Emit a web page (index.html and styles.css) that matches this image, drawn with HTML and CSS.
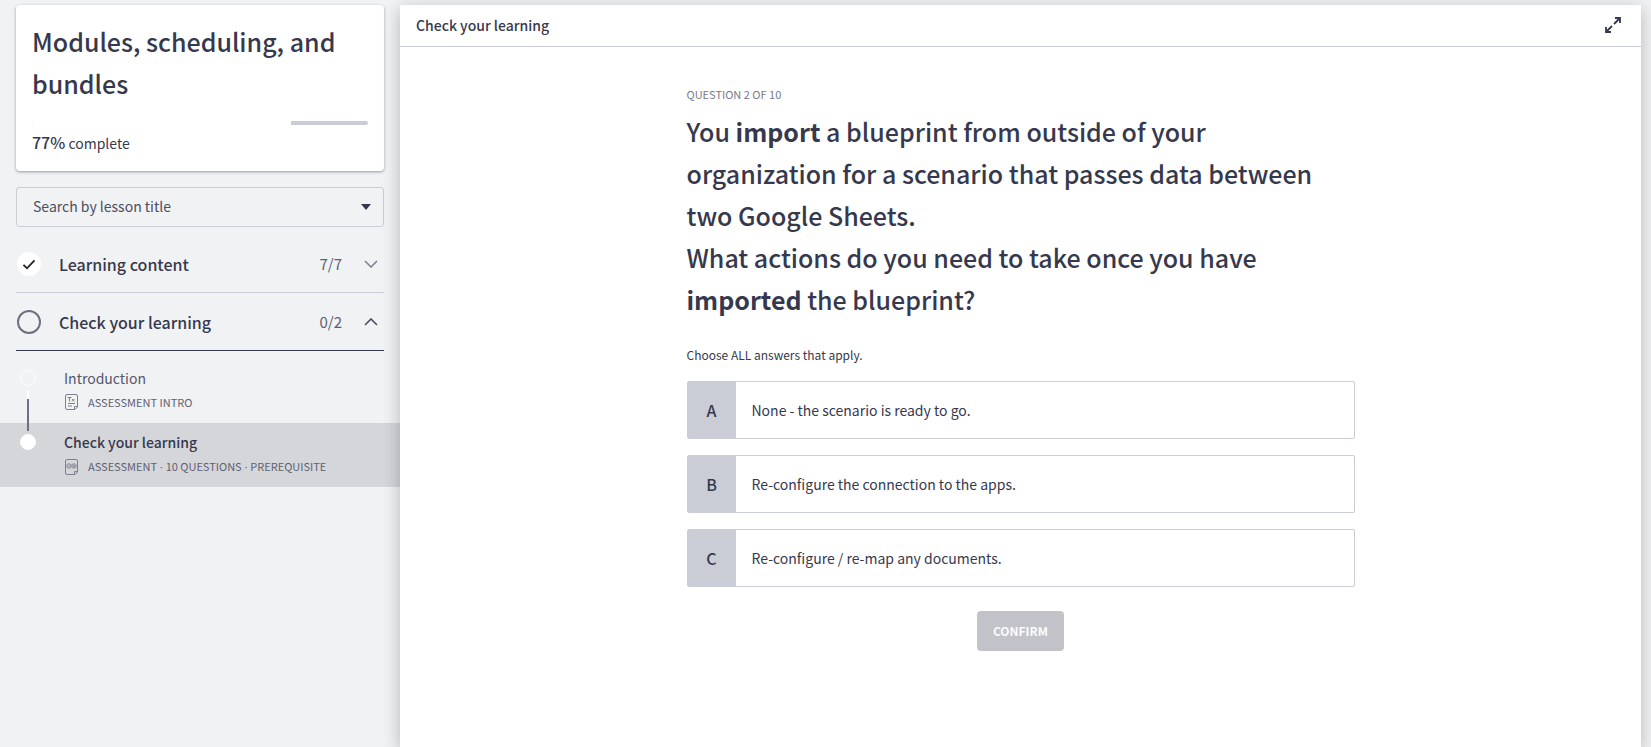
FILE: index.html
```html
<!DOCTYPE html>
<html lang="en">
<head>
<meta charset="utf-8">
<meta name="viewport" content="width=device-width, initial-scale=1">
<title>Modules, scheduling, and bundles</title>
<link rel="stylesheet" href="styles.css">
</head>
<body>
<div class="player">
  <aside class="sidebar">
    <div class="course">
      <h1 class="course-title">Modules, scheduling, and bundles</h1>
      <div class="progress"><div class="progress-fill" style="width: 77%"></div></div>
      <p class="course-status"><span class="percent">77%</span> complete</p>
    </div>
    <label class="search">
      <input class="search-input" type="text" placeholder="Search by lesson title" aria-label="Search by lesson title">
      <svg class="caret" width="10" height="6" viewBox="0 0 10 6"><path d="M0 0h10L5 6z" fill="#36394d"/></svg>
    </label>
    <nav class="chapters">
      <button class="chapter" type="button" aria-expanded="false">
        <svg class="chapter-mark" width="24" height="24" viewBox="0 0 24 24" fill="none"><circle cx="12" cy="12" r="12" fill="#fff"/><path d="M6.500 12.800l3.500 3.500 7.500-8" stroke="#222" stroke-width="1.800"/></svg>
        <span class="chapter-name">Learning content</span>
        <span class="chapter-count">7/7</span>
        <svg width="14" height="8" viewBox="0 0 14 8" fill="none"><path d="M1 1l6 6 6-6" stroke="#7f8294" stroke-width="1.600"/></svg>
      </button>
      <button class="chapter chapter-open" type="button" aria-expanded="true">
        <svg class="chapter-mark" width="24" height="24" viewBox="0 0 24 24" fill="none"><circle cx="12" cy="12" r="11" stroke="#6d7083" stroke-width="2"/></svg>
        <span class="chapter-name">Check your learning</span>
        <span class="chapter-count">0/2</span>
        <svg width="14" height="8" viewBox="0 0 14 8" fill="none"><path d="M1 7l6-6 6 6" stroke="#4c4f62" stroke-width="1.600"/></svg>
      </button>
    </nav>
    <div class="lessons">
      <a class="lesson" href="#introduction">
        <span class="track"><span class="dot"></span><span class="line"></span></span>
        <span class="lesson-body">
          <span class="lesson-name">Introduction</span>
          <span class="lesson-meta">
            <svg width="13" height="16" viewBox="0 0 13 16" fill="none" stroke="#7d8092"><path d="M2 .5h9a1.500 1.500 0 0 1 1.500 1.500v11l-2.500 2.500H2A1.500 1.500 0 0 1 .5 14V2A1.500 1.500 0 0 1 2 .5z"/><path d="M12.500 12.500h-3v3M2.500 3.500h4M4.500 3.500v4M7 5l2.500 2.500M9.500 5L7 7.500M3 9.500h7M3 12h4"/></svg>
            <span>ASSESSMENT INTRO</span>
          </span>
        </span>
      </a>
      <a class="lesson lesson-current" href="#check" aria-current="page">
        <span class="track"><span class="dot"></span></span>
        <span class="lesson-body">
          <span class="lesson-name">Check your learning</span>
          <span class="lesson-meta">
            <svg width="13" height="16" viewBox="0 0 13 16" fill="none" stroke="#7d8092"><path d="M2 .5h9a1.500 1.500 0 0 1 1.500 1.500v11l-2.500 2.500H2A1.500 1.500 0 0 1 .5 14V2A1.500 1.500 0 0 1 2 .5z"/><path d="M12.500 12.500h-3v3"/><circle cx="4" cy="7" r="2.200"/><circle cx="9" cy="7" r="2.200"/><path d="M2.800 6.800l1 1 2.200-2.600M8 6l2 2M10 6L8 8" stroke-width=".8"/></svg>
            <span>ASSESSMENT<span class="separator">&nbsp;·&nbsp;</span>10 QUESTIONS<span class="separator">&nbsp;·&nbsp;</span>PREREQUISITE</span>
          </span>
        </span>
      </a>
    </div>
  </aside>
  <main class="stage">
    <header class="stage-header">
      <h2 class="stage-title">Check your learning</h2>
      <button class="expand" type="button" aria-label="Full screen">
        <svg width="16" height="16" viewBox="0 0 16 16" fill="none" stroke="#36394d" stroke-width="1.800"><path d="M10 1h5v5M15 1L9 7M6 15H1v-5M1 15l6-6"/></svg>
      </button>
    </header>
    <form class="quiz">
      <p class="quiz-step">QUESTION 2 OF 10</p>
      <h3 class="quiz-question">You <b>import</b> a blueprint from outside of your organization for a scenario that passes data between two Google Sheets.<br>What actions do you need to take once you have <b>imported</b> the blueprint?</h3>
      <p class="quiz-hint">Choose ALL answers that apply.</p>
      <div class="answers">
        <label class="answer"><input class="answer-input" type="checkbox" name="answer" value="a"><span class="answer-key">A</span><span class="answer-text">None - the scenario is ready to go.</span></label>
        <label class="answer"><input class="answer-input" type="checkbox" name="answer" value="b"><span class="answer-key">B</span><span class="answer-text">Re-configure the connection to the apps.</span></label>
        <label class="answer"><input class="answer-input" type="checkbox" name="answer" value="c"><span class="answer-key">C</span><span class="answer-text">Re-configure / re-map any documents.</span></label>
      </div>
      <button class="confirm" type="submit" disabled>CONFIRM</button>
    </form>
  </main>
</div>
</body>
</html>
```
FILE: styles.css
```css
* {
  box-sizing: border-box;
}

body {
  margin: 0;
  background: #f1f2f4;
  color: #36394d;
  font: 14px/24px "Noto Sans CJK SC", "Noto Sans", sans-serif;
}

h1, h2, h3, p {
  margin: 0;
  font-weight: 500;
}

button, input {
  font: inherit;
  color: inherit;
}

button {
  padding: 0;
  border: 0;
  background: none;
}

.player {
  display: flex;
  min-height: 100vh;
  padding: 5px 10px 0 0;
  overflow: hidden;
}

.sidebar {
  flex: 0 0 400px;
}

.course {
  margin: 0 16px;
  padding: 15px 16px 16px;
  border-radius: 4px;
  background: #fff;
  box-shadow: 0 1px 3px rgba(40, 44, 60, 0.45);
}

.course-title,
.quiz-question {
  font-size: 25px;
  line-height: 42px;
}

.progress {
  display: flex;
  height: 4px;
  margin: 17px 0 6px;
  border-radius: 2px;
  background: #cacdd6;
  overflow: hidden;
}

.progress-fill {
  background: #fff;
}

.course-status {
  font-weight: 400;
}

.percent {
  font-weight: 500;
  font-size: 16px;
  line-height: 16px;
}

.search {
  display: flex;
  align-items: center;
  height: 40px;
  margin: 16px 16px 8px;
  padding: 0 12px 0 16px;
  border: 1px solid #cacdd6;
  border-radius: 3px;
}

.search-input {
  flex: 1;
  min-width: 0;
  padding: 0 0 2px;
  border: 0;
  outline: 0;
  background: none;
}

.search-input::placeholder {
  color: #4b4e5f;
  opacity: 1;
}

.chapters {
  margin: 0 16px;
}

.chapter {
  display: flex;
  align-items: center;
  width: 100%;
  height: 58px;
  padding: 0 6px 0 1px;
  border-bottom: 1px solid #cacdd6;
  text-align: left;
}

.chapter-open {
  border-color: #36394d;
}

.chapter-mark {
  margin-right: 18px;
}

.chapter-name {
  flex: 1;
  font-size: 16px;
  font-weight: 500;
}

.chapter-count {
  margin-right: 22px;
  color: #5d6072;
  font-size: 15px;
}

.lessons {
  padding-top: 8px;
}

.lesson {
  display: flex;
  gap: 28px;
  height: 64px;
  padding: 7px 16px 0 20px;
  color: #55586b;
  text-decoration: none;
}

.lesson-current {
  background: #d5d6da;
  color: #36394d;
}

.track {
  display: flex;
  flex-direction: column;
  align-items: center;
  gap: 5px;
  padding-top: 4px;
  width: 16px;
}

.dot {
  flex: 0 0 16px;
  width: 16px;
  border: 1px solid #fff;
  border-radius: 50%;
}

.lesson-current .dot {
  background: #fff;
}

.line {
  position: relative;
  z-index: 1;
  flex: 0 0 40px;
  width: 2px;
  background: linear-gradient(#fff 8px, #6d7083 8px);
}

.lesson-body {
  display: flex;
  flex-direction: column;
}

.lesson-current .lesson-name {
  font-weight: 500;
}

.lesson-meta {
  display: flex;
  align-items: center;
  gap: 10px;
  padding-left: 1px;
  color: #5d6072;
  font-size: 11px;
}

.separator {
  font-family: "Open Sans", sans-serif;
}

.stage {
  position: relative;
  z-index: 2;
  flex: 1;
  background: #fff;
  box-shadow: 0 4px 16px rgba(0, 0, 0, 0.25);
}

.stage-header {
  display: flex;
  align-items: center;
  justify-content: space-between;
  height: 42px;
  padding: 0 20px 2px 16px;
  border-bottom: 1px solid #cacdd6;
}

.stage-title {
  font-size: 14px;
}

.expand {
  display: flex;
}

.quiz {
  max-width: 668px;
  margin: 0 auto;
  padding: 35px 0;
}

.quiz-step {
  margin-bottom: 4px;
  color: #777a88;
  font-size: 11px;
  font-weight: 400;
}

.quiz-question {
  margin-bottom: 23px;
}

.quiz-hint {
  margin-bottom: 14px;
  font-size: 12px;
  font-weight: 400;
}

.answers {
  display: grid;
  gap: 16px;
}

.answer {
  position: relative;
  display: flex;
  min-height: 58px;
  border: 1px solid #cacdd6;
  border-radius: 2px;
}

.answer-input {
  position: absolute;
  inset: 0;
  margin: 0;
  appearance: none;
}

.answer-key {
  display: grid;
  place-items: center;
  width: 48px;
  background: #cacdd6;
  font-size: 16px;
  font-weight: 500;
}

.answer-text {
  align-self: center;
  padding: 0 16px;
}

.confirm {
  display: block;
  height: 40px;
  margin: 24px auto 0;
  padding: 0 16px;
  border-radius: 4px;
  background: #c2c3c9;
  color: #fafafc;
  font-size: 12px;
  font-weight: 700;
}
```
